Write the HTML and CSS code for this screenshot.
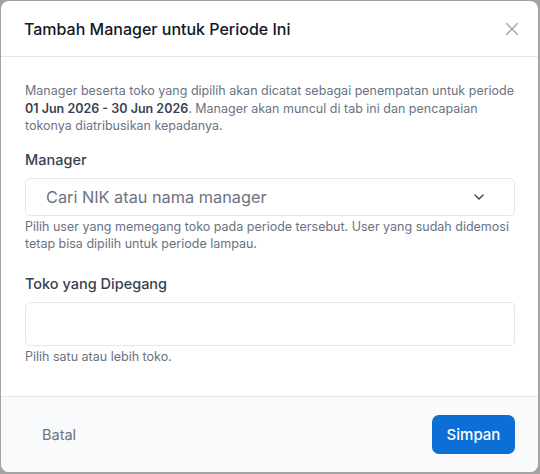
FILE: index.html
```html
<!DOCTYPE html>
<html lang="id">
<head>
  <meta charset="UTF-8">
  <title>Tambah Manager</title>
  <link rel="stylesheet" href="styles.css">
</head>
<body>
  <div class="modal">
    <div class="modal-header">
      <h2>Tambah Manager untuk Periode Ini</h2>
      <button class="close" aria-label="Tutup">
        <svg width="14" height="14" viewBox="0 0 14 14" fill="none" stroke="currentColor" stroke-width="1.3" stroke-linecap="round">
          <path d="M1.5 1.5l11 11M12.5 1.5l-11 11"/>
        </svg>
      </button>
    </div>

    <div class="modal-body">
      <p class="intro">Manager beserta toko yang dipilih akan dicatat sebagai penempatan untuk periode <strong>01 Jun 2026 - 30 Jun 2026</strong>. Manager akan muncul di tab ini dan pencapaian tokonya diatribusikan kepadanya.</p>

      <div class="field">
        <label>Manager</label>
        <div class="select">
          <span class="placeholder">Cari NIK atau nama manager</span>
          <svg width="14" height="14" viewBox="0 0 14 14" fill="none" stroke="#374151" stroke-width="1.4" stroke-linecap="round" stroke-linejoin="round">
            <path d="M3 5l4 4 4-4"/>
          </svg>
        </div>
        <p class="hint">Pilih user yang memegang toko pada periode tersebut. User yang sudah didemosi tetap bisa dipilih untuk periode lampau.</p>
      </div>

      <div class="field">
        <label>Toko yang Dipegang</label>
        <div class="multi"></div>
        <p class="hint">Pilih satu atau lebih toko.</p>
      </div>
    </div>

    <div class="modal-footer">
      <button class="btn-cancel">Batal</button>
      <button class="btn-save">Simpan</button>
    </div>
  </div>
</body>
</html>
```

FILE: styles.css
```css
html, body {
  height: 100%;
}
body {
  margin: 0;
  padding: 1px 2px 2px 1px;
  box-sizing: border-box;
  background: #a3a3a3;
  font-family: Inter, "Noto Sans", sans-serif;
}
.modal {
  height: 100%;
  background: white;
  border-radius: 8px;
  overflow: hidden;
  display: flex;
  flex-direction: column;
}
.modal-header {
  height: 55px;
  display: flex;
  align-items: center;
  justify-content: space-between;
  padding: 0 19px 0 23px;
  border-bottom: 1px solid #e5e7eb;
}
.modal-header h2 {
  margin: 0;
  font-size: 16px;
  font-weight: 500;
  color: #111827;
}
.close {
  border: none;
  background: none;
  padding: 0;
  color: #9ca3af;
  display: flex;
  cursor: pointer;
}
.modal-body {
  flex: 1;
  padding: 25px 23px 0 24px;
}
.intro {
  margin: 0 0 16px;
  font-size: 12.5px;
  line-height: 17.5px;
  color: #6b7280;
}
.intro strong {
  color: #374151;
  font-weight: 600;
}
.field {
  margin-bottom: 23px;
}
.field label {
  display: block;
  font-size: 14.5px;
  font-weight: 500;
  color: #374151;
  margin-bottom: 10px;
}
.select {
  height: 36px;
  border: 1px solid #e5e7eb;
  border-radius: 5px;
  display: flex;
  align-items: center;
  justify-content: space-between;
  padding: 0 28px 0 20px;
}
.placeholder {
  font-size: 16.3px;
  color: #6b7280;
}
.multi {
  height: 42px;
  border: 1px solid #e5e7eb;
  border-radius: 5px;
}
.hint {
  margin: 2px 0 0;
  font-size: 12.5px;
  line-height: 17px;
  color: #6b7280;
}
.modal-footer {
  height: 75px;
  background: #f9fafb;
  border-top: 1px solid #e5e7eb;
  display: flex;
  align-items: center;
  justify-content: space-between;
  padding: 0 23px;
}
.btn-cancel {
  border: none;
  background: none;
  font-family: inherit;
  font-size: 14.5px;
  color: #6b7280;
  padding: 8px 18px;
  cursor: pointer;
}
.btn-save {
  border: none;
  background: #0b6fd6;
  color: white;
  font-family: inherit;
  font-size: 15px;
  font-weight: 500;
  width: 83px;
  height: 39px;
  border-radius: 7px;
  cursor: pointer;
}
```
